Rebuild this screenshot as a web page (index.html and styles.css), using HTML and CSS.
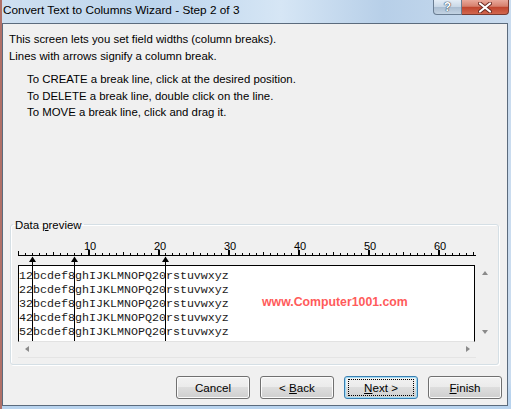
FILE: index.html
```html
<!DOCTYPE html>
<html lang="en">
<head>
    <meta charset="UTF-8">
    <title>Convert Text to Columns Wizard</title>
    <link rel="stylesheet" href="styles.css">
</head>
<body>
    <div class="window">
        <div class="titlebar">
            <span class="title">Convert Text to Columns Wizard - Step 2 of 3</span>
            <div class="caption-btns">
                <span class="cap-help">?</span>
                <span class="cap-close">
                    <svg width="14" height="11" viewBox="0 0 14 11">
                        <path d="M2 1.5 L12 9.5 M12 1.5 L2 9.5" stroke="#6b2a22" stroke-width="4" stroke-linecap="round"/>
                        <path d="M2 1.5 L12 9.5 M12 1.5 L2 9.5" stroke="#ffffff" stroke-width="2.2" stroke-linecap="round"/>
                    </svg>
                </span>
            </div>
        </div>

        <div class="client">
            <div class="intro">
                <p>This screen lets you set field widths (column breaks).<br>Lines with arrows signify a column break.</p>
                <ul class="howto">
                    <li>To CREATE a break line, click at the desired position.</li>
                    <li>To DELETE a break line, double click on the line.</li>
                    <li>To MOVE a break line, click and drag it.</li>
                </ul>
            </div>

            <fieldset class="group">
                <legend>Data <u>p</u>review</legend>
                <div class="preview-area">
                    <svg class="ruler" width="458" height="27" viewBox="0 0 458 27">
                        <defs>
                            <pattern id="tick" x="0" y="0" width="7" height="27" patternUnits="userSpaceOnUse">
                                <rect x="0" y="15" width="1" height="2" fill="#000"/>
                            </pattern>
                        </defs>
                        <rect x="0" y="0" width="458" height="27" fill="url(#tick)"/>
                        <rect x="0" y="17" width="458" height="1" fill="#000"/>
                        <g fill="#000">
                            <rect x="0" y="13" width="1" height="4"/>
                            <rect x="35" y="14" width="1" height="3"/>
                            <rect x="70" y="12" width="2" height="5"/>
                            <rect x="105" y="14" width="1" height="3"/>
                            <rect x="140" y="12" width="2" height="5"/>
                            <rect x="175" y="14" width="1" height="3"/>
                            <rect x="210" y="12" width="2" height="5"/>
                            <rect x="245" y="14" width="1" height="3"/>
                            <rect x="280" y="12" width="2" height="5"/>
                            <rect x="315" y="14" width="1" height="3"/>
                            <rect x="350" y="12" width="2" height="5"/>
                            <rect x="385" y="14" width="1" height="3"/>
                            <rect x="420" y="12" width="2" height="5"/>
                            <rect x="455" y="14" width="1" height="3"/>
                        </g>
                        <g class="ruler-nums" text-anchor="middle">
                            <text x="72" y="12">10</text>
                            <text x="142" y="12">20</text>
                            <text x="212" y="12">30</text>
                            <text x="282" y="12">40</text>
                            <text x="352" y="12">50</text>
                            <text x="422" y="12">60</text>
                        </g>
                    </svg>
                    <div class="preview-row">
                        <div class="preview-box">
<pre class="data">12bcdef8ghIJKLMNOPQ20rstuvwxyz
22bcdef8ghIJKLMNOPQ20rstuvwxyz
32bcdef8ghIJKLMNOPQ20rstuvwxyz
42bcdef8ghIJKLMNOPQ20rstuvwxyz
52bcdef8ghIJKLMNOPQ20rstuvwxyz</pre>
                            <span class="watermark">www.Computer1001.com</span>
                        </div>
                        <div class="vscroll">
                            <span class="arr-up"></span>
                            <span class="arr-down"></span>
                        </div>
                    </div>
                    <div class="hscroll">
                        <span class="arr-left"></span>
                        <span class="arr-right"></span>
                    </div>
                    <!-- column break lines lie over the ruler and the data -->
                    <svg class="breaks" width="458" height="103" viewBox="0 0 458 103">
                        <g fill="#000">
                            <rect x="14" y="19" width="1" height="84"/>
                            <path d="M14.5 18.5 L11 24 L18 24 Z"/>
                            <rect x="56" y="19" width="1" height="84"/>
                            <path d="M56.5 18.5 L53 24 L60 24 Z"/>
                            <rect x="147" y="19" width="1" height="84"/>
                            <path d="M147.5 18.5 L144 24 L151 24 Z"/>
                        </g>
                    </svg>
                </div>
            </fieldset>

            <div class="buttons">
                <button class="btn">Cancel</button>
                <button class="btn">&lt; <u>B</u>ack</button>
                <button class="btn btn-default"><span class="focus"><u>N</u>ext &gt;</span></button>
                <button class="btn"><u>F</u>inish</button>
            </div>
        </div>
    </div>
</body>
</html>
```

FILE: styles.css
```css
html, body {
    margin: 0;
    padding: 0;
}

body {
    width: 511px;
    height: 409px;
    overflow: hidden;
    font-family: "Liberation Sans", Arial, sans-serif;
    background: linear-gradient(to right, #cfe0f1 0%, #bcd4ec 30%, #d6e6f5 55%, #b7cfe8 75%, #cadcef 100%);
}

.window {
    display: flex;
    flex-direction: column;
    height: 409px;
    background: linear-gradient(to bottom, transparent 380px, #b8d3ee 395px);
    border-left: 2px solid #b07068;
    box-sizing: border-box;
}

.titlebar {
    display: flex;
    height: 23px;
}

.title {
    padding: 3px 0 0 1px;
    font-size: 11.8px;
    line-height: 15px;
    color: #000;
}

.caption-btns {
    display: flex;
    margin-left: auto;
    margin-right: 2px;
    height: 15px;
}

.cap-help {
    width: 27px;
    height: 14px;
    border: 1px solid #6a7d92;
    border-top: none;
    border-radius: 0 0 0 4px;
    background: linear-gradient(to bottom, #e4edf6 0%, #c8d7e6 50%, #aabdd1 51%, #c3d3e3 100%);
    color: #fff;
    font-size: 12px;
    font-weight: bold;
    line-height: 14px;
    text-align: center;
    text-shadow: 0 0 1px #3c4c5e, 0 0 1px #3c4c5e, 0 0 1px #3c4c5e;
}

.cap-close {
    display: flex;
    align-items: center;
    justify-content: center;
    width: 46px;
    height: 14px;
    border: 1px solid #7a3a30;
    border-left: none;
    border-top: none;
    border-radius: 0 0 4px 0;
    background: linear-gradient(to bottom, #e9a99b 0%, #d6806d 45%, #c0452e 52%, #d2674e 100%);
}

.client {
    flex: 1;
    margin: 0 3px 3px 0;
    border: 1px solid #5b6b7d;
    background: #f0f0f0;
    display: flex;
    flex-direction: column;
}

.intro {
    font-size: 11.4px;
    line-height: 16.5px;
    color: #000;
    padding: 7px 0 0 6px;
}

.intro p {
    margin: 0;
}

.howto {
    list-style: none;
    margin: 7px 0 0 0;
    padding: 0 0 0 18px;
}

.group {
    margin: 97px 8px 0 7px;
    padding: 6px 2px 6px 7px;
    border: 1px solid #d5dfe5;
    border-radius: 3px;
    box-shadow: inset 1px 1px 0 #fff, 1px 1px 0 #fff;
    min-width: 0;
}

.group legend {
    padding: 0 2px;
    margin-left: -5px;
    font-size: 11.4px;
    line-height: 14px;
    color: #000;
}

.preview-area {
    position: relative;
}

.ruler {
    display: block;
}

.ruler-nums {
    font-family: "Liberation Sans", Arial, sans-serif;
    font-size: 11px;
    fill: #000;
}

.preview-row {
    display: flex;
}

.preview-box {
    position: relative;
    width: 456px;
    height: 75px;
    background: #fff;
    border: 1px solid #000;
    border-bottom: 1px solid #e2e2e2;
}

.data {
    margin: 0;
    padding: 3px 0 0 0;
    font-family: "Liberation Mono", "Courier New", monospace;
    font-size: 11.67px;
    line-height: 14px;
    color: #1a1a1a;
}

.watermark {
    position: absolute;
    left: 243px;
    top: 29px;
    font-family: "Liberation Sans", Arial, sans-serif;
    font-weight: bold;
    font-size: 12.3px;
    color: #ff5b5b;
}

.vscroll {
    position: relative;
    width: 21px;
    height: 76px;
}

.arr-up, .arr-down, .arr-left, .arr-right {
    position: absolute;
    width: 0;
    height: 0;
}

.arr-up {
    left: 7px;
    top: 6px;
    border-left: 3.5px solid transparent;
    border-right: 3.5px solid transparent;
    border-bottom: 4px solid #8a8a8a;
}

.arr-down {
    left: 7px;
    top: 65px;
    border-left: 3.5px solid transparent;
    border-right: 3.5px solid transparent;
    border-top: 4px solid #8a8a8a;
}

.hscroll {
    position: relative;
    width: 458px;
    height: 15px;
    border-bottom: 1px solid #e4e4e4;
}

.arr-left {
    left: 7px;
    top: 4px;
    border-top: 3.5px solid transparent;
    border-bottom: 3.5px solid transparent;
    border-right: 4px solid #8a8a8a;
}

.arr-right {
    left: 448px;
    top: 4px;
    border-top: 3.5px solid transparent;
    border-bottom: 3.5px solid transparent;
    border-left: 4px solid #8a8a8a;
}

.breaks {
    position: absolute;
    left: 0;
    top: 0;
}

.buttons {
    display: flex;
    justify-content: flex-end;
    gap: 10px;
    margin-top: 11px;
    padding-right: 5px;
}

.btn {
    width: 74px;
    height: 23px;
    padding: 0;
    border: 1px solid #707070;
    border-radius: 3px;
    background: linear-gradient(to bottom, #f2f2f2 0%, #ebebeb 48%, #dddddd 50%, #cfcfcf 100%);
    box-shadow: inset 0 0 0 1px #fbfbfb;
    font-family: "Liberation Sans", Arial, sans-serif;
    font-size: 11.6px;
    color: #000;
}

.btn-default {
    border-color: #3c7fb1;
    box-shadow: inset 0 0 0 1px #9fdcf7;
}

.focus {
    display: block;
    margin: 0 3px;
    border: 1px dotted #000;
    line-height: 15px;
}
```
